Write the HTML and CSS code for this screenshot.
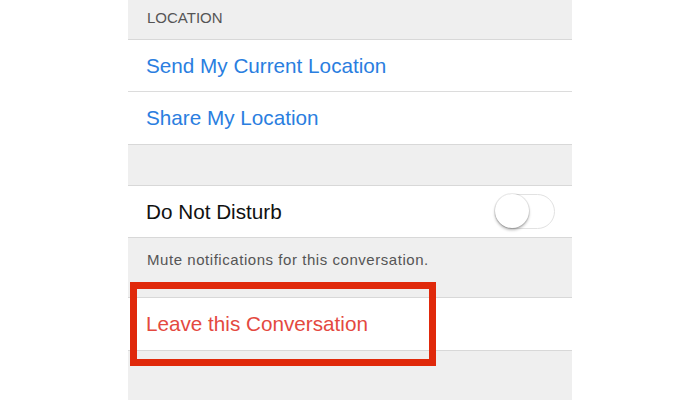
FILE: index.html
```html
<!DOCTYPE html>
<html lang="en">
<head>
    <meta charset="UTF-8">
    <meta name="viewport" content="width=device-width, initial-scale=1.0">
    <title>Details</title>
    <link rel="stylesheet" href="styles.css">
</head>
<body>

    <div id="settings">
        <div class="section-header">LOCATION</div>

        <div class="group">
            <div class="row link inset">Send My Current Location</div>
            <div class="row link">Share My Location</div>
        </div>

        <div class="spacer"></div>

        <div class="group">
            <div class="row short">
                <span>Do Not Disturb</span>
                <span class="switch"><span class="knob"></span></span>
            </div>
        </div>
        <div class="section-footer">Mute notifications for this conversation.</div>

        <div class="group">
            <div class="row danger">Leave this Conversation</div>
        </div>

        <div id="highlight"></div>
    </div>

</body>
</html>
```

FILE: styles.css
```css
body, html {
    margin: 0;
    padding: 0;
    width: 100%;
    height: 100%;
    background-color: #fff;
    font-family: 'Liberation Sans', Arial, sans-serif;
    overflow: hidden;
}

body {
    display: flex;
    justify-content: center;
}

#settings {
    position: relative;
    width: 444px;
    height: 400px;
    background-color: #efefef;
}

.section-header {
    height: 40px;
    padding: 9px 0 0 19px;
    box-sizing: border-box;
    font-size: 15px;
    color: #555;
    border-bottom: 1px solid #d8d8d8;
}

.group {
    background-color: #fff;
    border-bottom: 1px solid #d8d8d8;
}

.row {
    height: 52px;
    display: flex;
    align-items: center;
    justify-content: space-between;
    padding: 0 17px 0 18px;
    font-size: 20.7px;
    color: #111;
}
.row.inset { box-shadow: inset 0 -1px 0 #dcdcdc; }
.row.short { height: 51px; }
.row.link { color: #2a7ee0; }
.row.danger { color: #e4493f; }

.spacer {
    height: 40px;
    border-bottom: 1px solid #d8d8d8;
}

.section-footer {
    height: 60px;
    padding: 13px 0 0 19px;
    box-sizing: border-box;
    font-size: 15px;
    letter-spacing: 0.55px;
    color: #555;
    border-bottom: 1px solid #d8d8d8;
}

.switch {
    position: relative;
    width: 60px;
    height: 35px;
    border: 1.5px solid #e2e2e2;
    border-radius: 18px;
    box-sizing: border-box;
    background-color: #fff;
}
.switch .knob {
    position: absolute;
    top: -1px;
    left: -1px;
    width: 34px;
    height: 34px;
    border-radius: 50%;
    background-color: #fff;
    box-shadow: 0 2px 3px rgba(0, 0, 0, 0.3), 0 0 0 1px rgba(0, 0, 0, 0.08);
}

#highlight {
    position: absolute;
    left: 2px;
    top: 282px;
    width: 306px;
    height: 84px;
    border: 7px solid #e0290b;
    box-sizing: border-box;
}
```
